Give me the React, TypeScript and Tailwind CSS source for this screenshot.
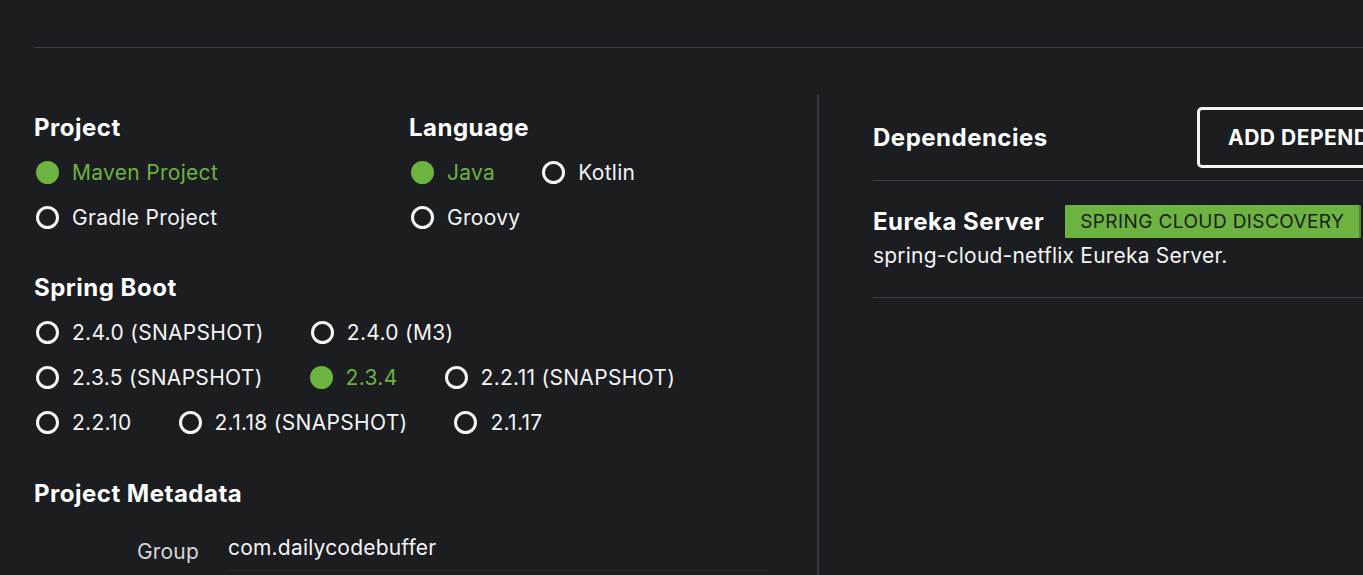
import React from "react"

const font = { fontFamily: "Inter, 'Open Sans', sans-serif" }

function Radio({ label, checked = false }: { label: string; checked?: boolean }) {
  return (
    <div className="flex h-[45px] items-center pl-[2px]">
      {checked ? (
        <span className="h-[23px] w-[23px] shrink-0 rounded-full bg-[#6db33f]" />
      ) : (
        <span className="h-[23px] w-[23px] shrink-0 rounded-full border-[3px] border-[#f4f4f4]" />
      )}
      <span
        className={`ml-[13px] whitespace-nowrap text-[21px] leading-none tracking-[0.3px] ${
          checked ? "text-[#6db33f]" : "text-[#f4f4f4]"
        }`}
      >
        {label}
      </span>
    </div>
  )
}

function Heading({ children }: { children: React.ReactNode }) {
  return (
    <h2 className="h-[28px] text-[24px] font-bold leading-[28px] tracking-[0.5px] text-white">{children}</h2>
  )
}

export default function App() {
  return (
    <div style={font} className="h-[575px] w-[1363px] overflow-hidden bg-[#1b1d20]">
      <div className="h-[47px]" />
      <div className="ml-[34px] border-t border-[#3b3e42]" />

      <div className="mt-[46px] flex">
        {/* Left: project options */}
        <div className="h-[500px] w-[819px] shrink-0 border-r-2 border-[#35383c] pl-[34px] pt-[20px]">
          <div className="flex">
            <div className="w-[375px]">
              <Heading>Project</Heading>
              <div className="mt-[8px]">
                <Radio label="Maven Project" checked />
                <Radio label="Gradle Project" />
              </div>
            </div>
            <div>
              <Heading>Language</Heading>
              <div className="mt-[8px]">
                <div className="flex gap-[45px]">
                  <Radio label="Java" checked />
                  <Radio label="Kotlin" />
                </div>
                <Radio label="Groovy" />
              </div>
            </div>
          </div>

          <div className="mt-[34px]">
            <Heading>Spring Boot</Heading>
            <div className="mt-[8px]">
              <div className="flex gap-[45px]">
                <Radio label="2.4.0 (SNAPSHOT)" />
                <Radio label="2.4.0 (M3)" />
              </div>
              <div className="flex gap-[45px]">
                <Radio label="2.3.5 (SNAPSHOT)" />
                <Radio label="2.3.4" checked />
                <Radio label="2.2.11 (SNAPSHOT)" />
              </div>
              <div className="flex gap-[45px]">
                <Radio label="2.2.10" />
                <Radio label="2.1.18 (SNAPSHOT)" />
                <Radio label="2.1.17" />
              </div>
            </div>
          </div>

          <div className="mt-[35px]">
            <Heading>Project Metadata</Heading>
            <div className="mt-[24px] flex items-center">
              <label className="w-[165px] text-right text-[21px] tracking-[0.2px] text-[#d6d6d6]">Group</label>
              <div className="ml-[29px] w-[540px] border-b border-[#2a2c30] pb-[6px] text-[21px] tracking-[0.2px] text-[#f4f4f4]">
                com.dailycodebuffer
              </div>
            </div>
          </div>
        </div>

        {/* Right: dependencies */}
        <div className="w-[700px] shrink-0 pl-[54px] pt-[13px]">
          <div className="flex items-center">
            <h2 className="w-[324px] shrink-0 text-[24px] font-bold tracking-[0.5px] text-white">Dependencies</h2>
            <button className="h-[61px] w-[330px] shrink-0 rounded-[5px] border-[3px] border-[#f4f4f4] pl-[28px] text-left text-[21px] font-bold tracking-[0.5px] whitespace-nowrap text-white">
              ADD DEPENDENCIES
            </button>
          </div>
          <div className="mt-[12px] border-t border-[#3b3e42]" />
          <div className="border-b border-[#3b3e42] pb-[27px] pt-[24px]">
            <div className="flex h-[33px] items-center">
              <span className="text-[24px] font-bold tracking-[0.5px] text-white">Eureka Server</span>
              <span className="ml-[21px] h-[33px] rounded-[1px] border-r-2 border-[#4c8a2b] bg-[#6db33f] px-[15px] text-[19px] leading-[33px] tracking-[0.4px] whitespace-nowrap text-[#1b1d20]">
                SPRING CLOUD DISCOVERY
              </span>
            </div>
            <p className="mt-[4px] text-[21px] leading-[28px] tracking-[0.2px] text-[#f4f4f4]">
              spring-cloud-netflix Eureka Server.
            </p>
          </div>
        </div>
      </div>
    </div>
  )
}
